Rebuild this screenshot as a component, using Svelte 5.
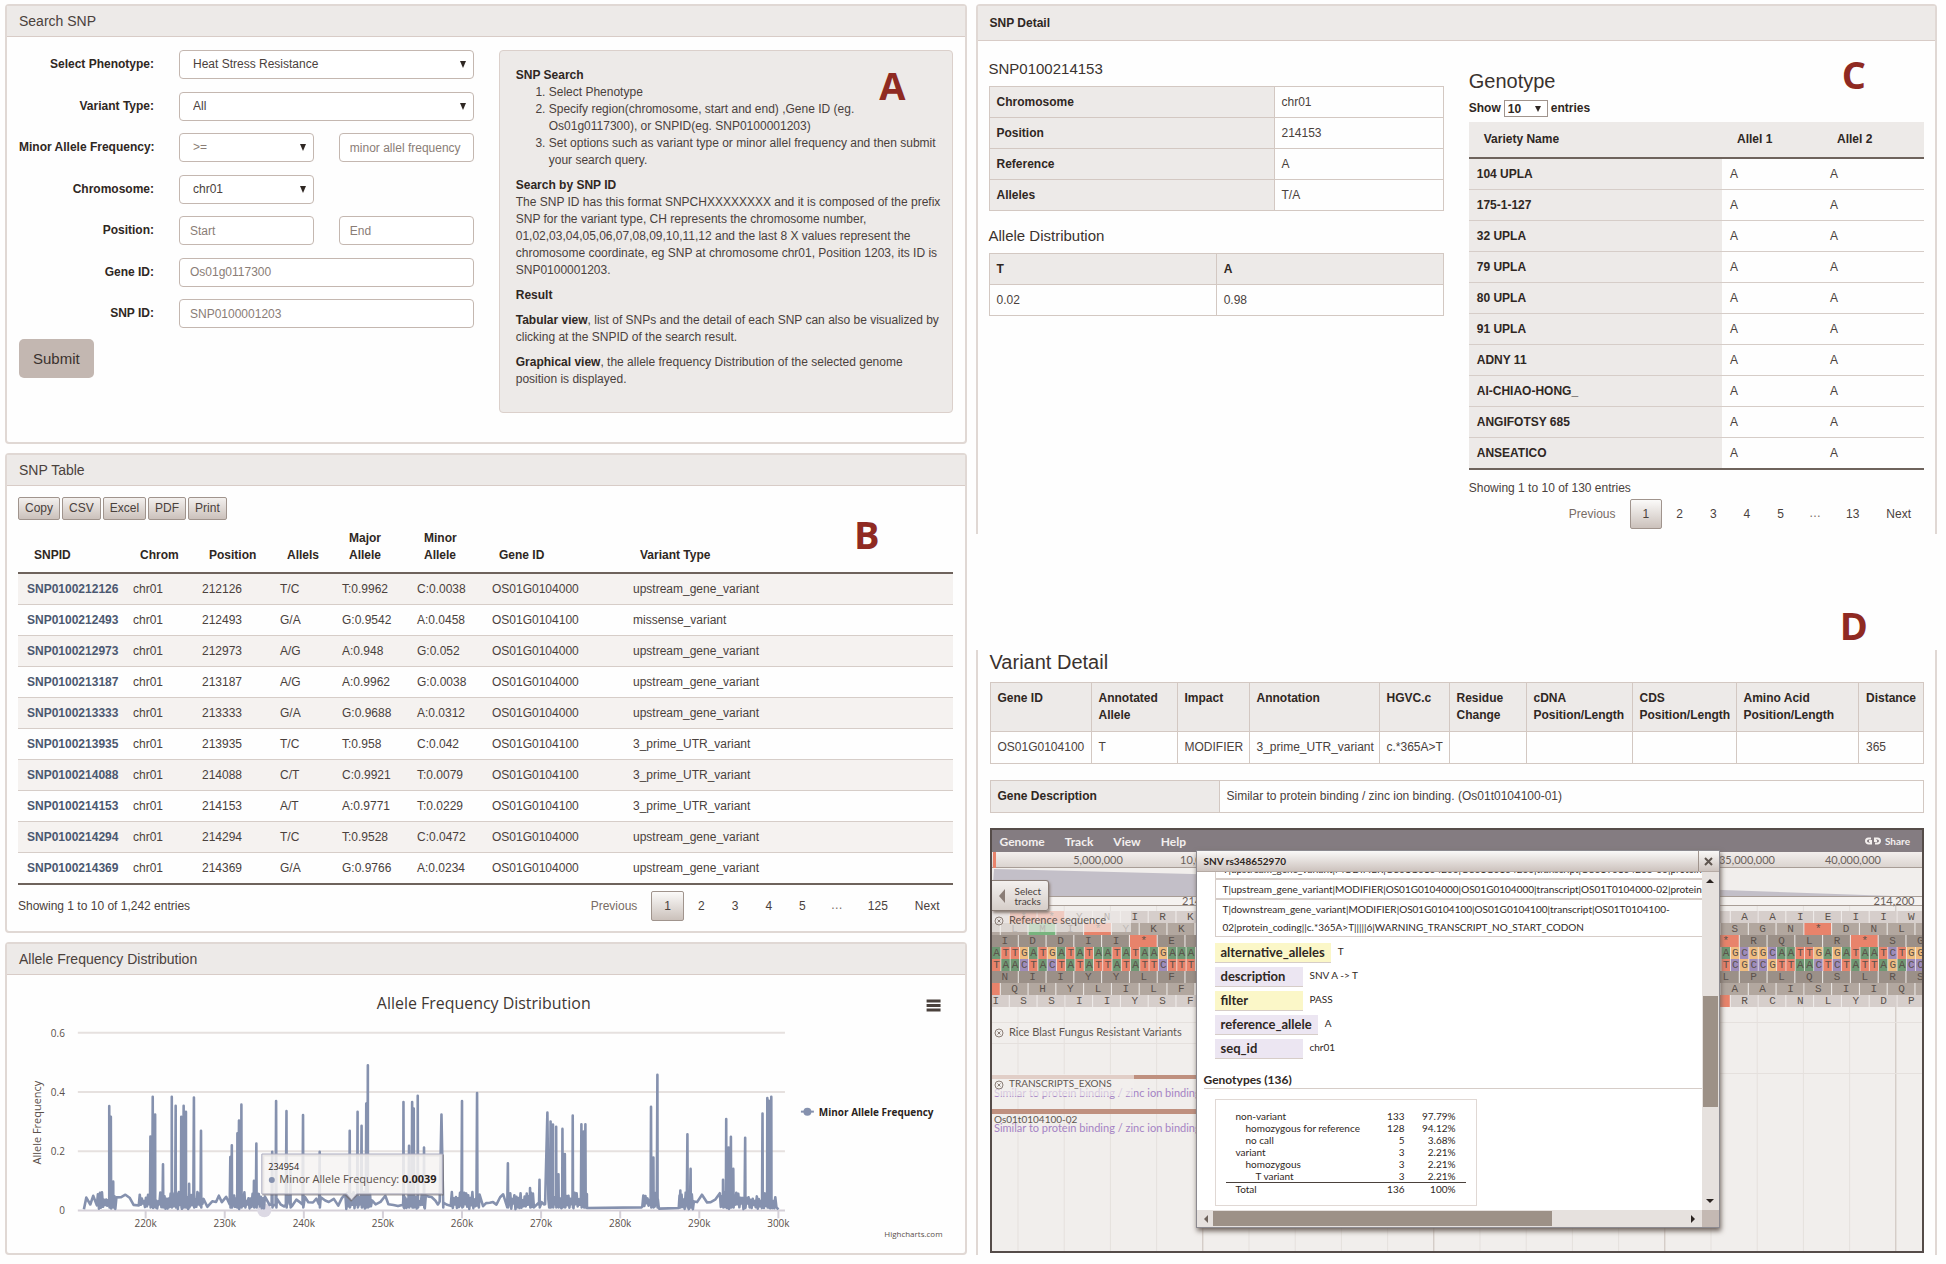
<script>
  // Search form
  let phenotype = "Heat Stress Resistance";
  let variantType = "All";
  let operator = ">=";
  let chromosome = "chr01";
  let pageSize = "10";

  const exportButtons = ["Copy", "CSV", "Excel", "PDF", "Print"];

  const snps = [
    ["SNP0100212126", "212126", "T/C", "T:0.9962", "C:0.0038", "OS01G0104000", "upstream_gene_variant"],
    ["SNP0100212493", "212493", "G/A", "G:0.9542", "A:0.0458", "OS01G0104100", "missense_variant"],
    ["SNP0100212973", "212973", "A/G", "A:0.948", "G:0.052", "OS01G0104000", "upstream_gene_variant"],
    ["SNP0100213187", "213187", "A/G", "A:0.9962", "G:0.0038", "OS01G0104000", "upstream_gene_variant"],
    ["SNP0100213333", "213333", "G/A", "G:0.9688", "A:0.0312", "OS01G0104000", "upstream_gene_variant"],
    ["SNP0100213935", "213935", "T/C", "T:0.958", "C:0.042", "OS01G0104100", "3_prime_UTR_variant"],
    ["SNP0100214088", "214088", "C/T", "C:0.9921", "T:0.0079", "OS01G0104100", "3_prime_UTR_variant"],
    ["SNP0100214153", "214153", "A/T", "A:0.9771", "T:0.0229", "OS01G0104100", "3_prime_UTR_variant"],
    ["SNP0100214294", "214294", "T/C", "T:0.9528", "C:0.0472", "OS01G0104000", "upstream_gene_variant"],
    ["SNP0100214369", "214369", "G/A", "G:0.9766", "A:0.0234", "OS01G0104000", "upstream_gene_variant"],
  ];

  const snpPages = ["Previous", "1", "2", "3", "4", "5", "…", "125", "Next"];
  const genotypePages = ["Previous", "1", "2", "3", "4", "5", "…", "13", "Next"];

  const snpDetail = [
    ["Chromosome", "chr01"],
    ["Position", "214153"],
    ["Reference", "A"],
    ["Alleles", "T/A"],
  ];

  const varieties = [
    "104 UPLA", "175-1-127", "32 UPLA", "79 UPLA", "80 UPLA",
    "91 UPLA", "ADNY 11", "AI-CHIAO-HONG_", "ANGIFOTSY 685", "ANSEATICO",
  ];

  const attributes = [
    ["alternative_alleles", "T"],
    ["description", "SNV A -> T"],
    ["filter", "PASS"],
    ["reference_allele", "A"],
    ["seq_id", "chr01"],
  ];

  // label, indent level, count, percent
  const genotypes = [
    ["non-variant", 0, 133, "97.79%"],
    ["homozygous for reference", 1, 128, "94.12%"],
    ["no call", 1, 5, "3.68%"],
    ["variant", 0, 3, "2.21%"],
    ["homozygous", 1, 3, "2.21%"],
    ["T variant", 2, 3, "2.21%"],
  ];

  // Allele frequency chart: [position in kb, frequency]
  const peaks = [
    [215.4, 0.352], [215.6, 0.316], [215.9, 0.097], [220.6, 0.249], [220.9, 0.384], [221.2, 0.324],
    [222.2, 0.156], [223.3, 0.384], [223.8, 0.353], [224.5, 0.316], [224.8, 0.353], [225.1, 0.333],
    [225.5, 0.09], [226.1, 0.381], [227, 0.269], [230.7, 0.18], [230.9, 0.22], [231.6, 0.26],
    [231.8, 0.303], [232.1, 0.357], [233.7, 0.1], [234, 0.226], [236, 0.198], [236.5, 0.369],
    [237.8, 0.335], [238.3, 0.14], [239.9, 0.322], [242, 0.198], [245.8, 0.269], [246.8, 0.333],
    [247.3, 0.286], [247.9, 0.361], [248.1, 0.49], [252.6, 0.366], [253.3, 0.218], [253.7, 0.366],
    [253.9, 0.344], [254.4, 0.387], [255.2, 0.212], [257.4, 0.324], [260, 0.369], [261.9, 0.396],
    [265.8, 0.159], [268.6, 0.075], [269.8, 0.103], [270.8, 0.33], [271.2, 0.3], [271.5, 0.29],
    [271.9, 0.282], [272.2, 0.122], [272.7, 0.275], [273, 0.19], [274, 0.32], [275.1, 0.291],
    [275.4, 0.266], [275.6, 0.291], [283.9, 0.35], [284.2, 0.178], [284.7, 0.458], [287.6, 0.067],
    [288.5, 0.257], [288.9, 0.14], [293, 0.103], [293.4, 0.308], [293.7, 0.212], [294, 0.248],
    [294.3, 0.14], [295.8, 0.245], [298, 0.327], [298.6, 0.379], [298.8, 0.37], [299.1, 0.384],
  ];
  const wide = [257.4, 261.9, 270.8];
  const sparse = [[212, 213.8], [216.2, 219], [227.2, 230.4], [235, 245], [248.6, 252.4], [255.4, 258.2], [262.1, 266], [269, 271], [289.2, 292.4]];
  const flat = [[275.8, 282.7, 0.008], [284.9, 287.4, 0.006]];

  const chartX = (kb) => Math.round((139 + (kb - 220) * 7.93) * 10) / 10;
  const chartY = (f) => Math.round((236 - f * 297) * 10) / 10;

  function buildLine() {
    let seed = 17;
    const random = () => {
      seed = (seed * 1103515245 + 12345) % 2147483648;
      return seed / 2147483648;
    };
    const points = [[212.2, 0.004]];
    let low = false;
    let kb = 212.5;
    while (kb < 299.8) {
      const gap = flat.find(([from, to]) => kb >= from && kb < to);
      if (gap) {
        points.push([gap[0], gap[2]], [gap[1], gap[2] + 0.002]);
        kb = gap[1] + 0.1;
        continue;
      }
      const calm = sparse.some(([from, to]) => kb >= from && kb < to);
      if (calm) {
        points.push([kb, 0.01 + random() * 0.045]);
        kb += 0.35 + random() * 0.3;
      } else {
        points.push([kb, low ? 0.004 + random() * 0.02 : 0.03 + random() * 0.032]);
        kb += 0.13;
      }
      low = !low;
    }
    points.push([300, 0.003]);
    for (const [at, f] of peaks) {
      const half = wide.includes(at) ? 0.45 : 0.07;
      points.push([at - half, 0.02], [at, f], [at + half / 2, 0.01]);
    }
    points.sort((a, b) => a[0] - b[0]);
    return "M" + points.map(([x, f]) => `${chartX(x)} ${chartY(f)}`).join("L");
  }

  const linePath = buildLine();
  const xTicks = [220, 230, 240, 250, 260, 270, 280, 290, 300];
  const yTicks = [0, 0.2, 0.4, 0.6];

  // Genome browser: reference sequence and its six reading frames
  const baseWidth = 9.26;
  const baseRows = [
    { y: 95, x: 0, seq: "ATTGATGATATAATATAAGAAA" },
    { y: 107, x: 0, seq: "TAACTACTATATTATATTCTTT" },
    { y: 95, x: 729.5, seq: "AGCGGCAATTGAGATAATCTGG" },
    { y: 107, x: 729.5, seq: "TCGCCGTTAACTCTATTAGACC" },
  ];
  // x is the left edge of the first codon
  const frameRows = [
    { y: 59, tone: "light", x: -10, seq: " **YNIRK" },
    { y: 71, tone: "mid", x: -19, seq: " LMI*YKK" },
    { y: 83, tone: "dark", x: -1, seq: "IDDII*EN" },
    { y: 119, tone: "dark", x: -1, seq: "NIIYYLFF" },
    { y: 131, tone: "mid", x: -19, seq: "*QHYLILF" },
    { y: 143, tone: "light", x: -10, seq: "ISSIIYSF" },
    { y: 59, tone: "light", x: 711, seq: " AAIEIIW" },
    { y: 71, tone: "mid", x: 729, seq: "SGN*DNL " },
    { y: 83, tone: "dark", x: 720, seq: "*RQLR*SG" },
    { y: 119, tone: "dark", x: 720, seq: "LPLQSLRS" },
    { y: 131, tone: "mid", x: 729, seq: "AAISIIQ " },
    { y: 143, tone: "light", x: 711, seq: "*RCNLYDP" },
  ];
  const codonWidth = 27.78;
  const gridLines = Array.from({ length: 20 }, (_, k) => ({ x: 26 + k * 46.2, major: k % 5 === 4 }));
</script>

{#snippet pager(pages)}
  <nav class="pager" aria-label="Pages">
    {#each pages as page}
      {#if page === "…"}
        <span class="ellipsis">…</span>
      {:else}
        <button
          type="button"
          class:current={page === "1"}
          class:muted={page === "Previous"}>{page}</button
        >
      {/if}
    {/each}
  </nav>
{/snippet}

<main class="page">
  <div class="column">
    <!-- Search form -->
    <section class="panel search-panel">
      <h2 class="panel-title">Search SNP</h2>
      <div class="search-body">
        <form class="search-form" onsubmit={(e) => e.preventDefault()}>
          <div class="fields">
            <div class="field">
              <label for="phenotype">Select Phenotype:</label>
              <div class="select">
                <select id="phenotype" bind:value={phenotype}>
                  <option>Heat Stress Resistance</option>
                </select>
              </div>
            </div>
            <div class="field">
              <label for="variant-type">Variant Type:</label>
              <div class="select">
                <select id="variant-type" bind:value={variantType}>
                  <option>All</option>
                </select>
              </div>
            </div>
            <div class="field split">
              <label for="maf-operator">Minor Allele Frequency:</label>
              <div class="select">
                <select id="maf-operator" class="soft" bind:value={operator}>
                  <option>&gt;=</option>
                </select>
              </div>
              <input type="text" placeholder="minor allel frequency" aria-label="Minor allele frequency value" />
            </div>
            <div class="field split">
              <label for="chromosome">Chromosome:</label>
              <div class="select">
                <select id="chromosome" bind:value={chromosome}>
                  <option>chr01</option>
                </select>
              </div>
            </div>
            <div class="field split">
              <label for="start">Position:</label>
              <input id="start" type="text" placeholder="Start" />
              <input type="text" placeholder="End" aria-label="End position" />
            </div>
            <div class="field">
              <label for="gene-id">Gene ID:</label>
              <input id="gene-id" type="text" placeholder="Os01g0117300" />
            </div>
            <div class="field">
              <label for="snp-id">SNP ID:</label>
              <input id="snp-id" type="text" placeholder="SNP0100001203" />
            </div>
          </div>
          <button type="submit" class="submit">Submit</button>
        </form>

        <div class="help">
          <strong>SNP Search</strong>
          <ol>
            <li>Select Phenotype</li>
            <li>Specify region(chromosome, start and end) ,Gene ID (eg. Os01g0117300), or SNPID(eg. SNP0100001203)</li>
            <li>Set options such as variant type or minor allel frequency and then submit your search query.</li>
          </ol>
          <p>
            <strong>Search by SNP ID</strong><br />
            The SNP ID has this format SNPCHXXXXXXXX and it is composed of the prefix SNP for the variant type, CH
            represents the chromosome number, 01,02,03,04,05,06,07,08,09,10,11,12 and the last 8 X values represent the
            chromosome coordinate, eg SNP at chromosome chr01, Position 1203, its ID is SNP0100001203.
          </p>
          <p><strong>Result</strong></p>
          <p>
            <strong>Tabular view</strong>, list of SNPs and the detail of each SNP can also be visualized by clicking at
            the SNPID of the search result.
          </p>
          <p>
            <strong>Graphical view</strong>, the allele frequency Distribution of the selected genome position is
            displayed.
          </p>
          <span class="mark mark-a">A</span>
        </div>
      </div>
    </section>

    <!-- SNP table -->
    <section class="panel table-panel">
      <h2 class="panel-title">SNP Table</h2>
      <div class="table-body">
        <div class="exports">
          {#each exportButtons as name}
            <button type="button">{name}</button>
          {/each}
        </div>
        <table class="snp-table">
          <thead>
            <tr>
              <th class="w-id">SNPID</th>
              <th class="w-chrom">Chrom</th>
              <th class="w-pos">Position</th>
              <th class="w-allels">Allels</th>
              <th class="w-allele">Major<br />Allele</th>
              <th class="w-allele">Minor<br />Allele</th>
              <th class="w-gene">Gene ID</th>
              <th>Variant Type</th>
            </tr>
          </thead>
          <tbody>
            {#each snps as [id, position, allels, major, minor, gene, type]}
              <tr>
                <td><a href="#{id}">{id}</a></td>
                <td>chr01</td>
                <td>{position}</td>
                <td>{allels}</td>
                <td>{major}</td>
                <td>{minor}</td>
                <td>{gene}</td>
                <td>{type}</td>
              </tr>
            {/each}
          </tbody>
        </table>
        <div class="table-footer">
          <span>Showing 1 to 10 of 1,242 entries</span>
          {@render pager(snpPages)}
        </div>
      </div>
      <span class="mark mark-b">B</span>
    </section>

    <!-- Frequency chart -->
    <section class="panel">
      <h2 class="panel-title">Allele Frequency Distribution</h2>
      <svg class="chart" viewBox="0 0 960 279" role="img" aria-label="Allele Frequency Distribution">
        <text class="chart-title" x="478" y="34" text-anchor="middle">Allele Frequency Distribution</text>
        {#each yTicks as tick}
          <line class={tick ? "grid-line" : "axis-line"} x1="71" x2="780" y1={chartY(tick)} y2={chartY(tick)} />
          <text class="tick" x="58" y={chartY(tick) + 4} text-anchor="end">{tick}</text>
        {/each}
        {#each xTicks as tick}
          <line class="axis-line" x1={chartX(tick)} x2={chartX(tick)} y1="236" y2="244" />
          <text class="tick" x={chartX(tick)} y="253" text-anchor="middle">{tick}k</text>
        {/each}
        <text class="axis-title" transform="translate(34 148) rotate(-90)" text-anchor="middle">Allele Frequency</text>
        <circle class="halo" cx="258" cy="236" r="7" />
        <path class="series" d={linePath} />

        <g class="menu-icon">
          <path d="M922 26h14M922 30.500h14M922 35h14" />
        </g>
        <path class="legend-line" d="M796 137h13" />
        <circle class="dot" cx="802.500" cy="137" r="4" />
        <text class="legend" x="814" y="141">Minor Allele Frequency</text>

        <path class="tooltip-shadow" d="M257 181h180v39h-86l-6 6l-6-6h-82z" />
        <path class="tooltip" d="M255.500 179.500h181v40h-86l-5 6l-5-6h-85z" />
        <text class="tip-small" x="262" y="196">234954</text>
        <circle class="dot" cx="265.500" cy="205.500" r="3" />
        <text class="tip" x="273" y="209">Minor Allele Frequency: <tspan class="strong">0.0039</tspan></text>
        <text class="credits" x="938" y="263" text-anchor="end">Highcharts.com</text>
      </svg>
    </section>
  </div>

  <div class="column">
    <!-- SNP detail -->
    <section class="panel detail-panel">
      <h2 class="panel-title small">SNP Detail</h2>
      <div class="detail-body">
        <div class="detail-left">
          <h3>SNP0100214153</h3>
          <table class="bordered compact info">
            <tbody>
              {#each snpDetail as [name, value]}
                <tr>
                  <th scope="row">{name}</th>
                  <td>{value}</td>
                </tr>
              {/each}
            </tbody>
          </table>
          <h3>Allele Distribution</h3>
          <table class="bordered compact">
            <thead>
              <tr><th>T</th><th>A</th></tr>
            </thead>
            <tbody>
              <tr><td>0.02</td><td>0.98</td></tr>
            </tbody>
          </table>
        </div>

        <div class="genotype">
          <h3 class="large">Genotype</h3>
          <label class="page-size">
            Show
            <span class="select tiny">
              <select bind:value={pageSize}>
                <option>10</option>
              </select>
            </span>
            entries
          </label>
          <table class="genotype-table">
            <thead>
              <tr>
                <th>Variety Name</th>
                <th class="w-allel-1">Allel 1</th>
                <th class="w-allel-2">Allel 2</th>
              </tr>
            </thead>
            <tbody>
              {#each varieties as variety}
                <tr>
                  <th scope="row">{variety}</th>
                  <td>A</td>
                  <td>A</td>
                </tr>
              {/each}
            </tbody>
          </table>
          <div class="genotype-info">Showing 1 to 10 of 130 entries</div>
          {@render pager(genotypePages)}
        </div>
      </div>
      <span class="mark mark-c">C</span>
    </section>

    <!-- Variant detail -->
    <section class="variant-panel">
      <span class="mark mark-d">D</span>
      <h3 class="large">Variant Detail</h3>
      <table class="bordered variant-table">
        <thead>
          <tr>
            <th class="v-gene">Gene ID</th>
            <th class="v-allele">Annotated Allele</th>
            <th class="v-impact">Impact</th>
            <th class="v-annotation">Annotation</th>
            <th class="v-hgvc">HGVC.c</th>
            <th class="v-residue">Residue Change</th>
            <th class="v-cdna">cDNA Position/Length</th>
            <th class="v-cds">CDS Position/Length</th>
            <th>Amino Acid<br />Position/Length</th>
            <th class="v-distance">Distance</th>
          </tr>
        </thead>
        <tbody>
          <tr>
            <td>OS01G0104100</td>
            <td>T</td>
            <td>MODIFIER</td>
            <td>3_prime_UTR_variant</td>
            <td>c.*365A&gt;T</td>
            <td></td>
            <td></td>
            <td></td>
            <td></td>
            <td>365</td>
          </tr>
        </tbody>
      </table>
      <table class="bordered description-table">
        <tbody>
          <tr>
            <th scope="row">Gene Description</th>
            <td>Similar to protein binding / zinc ion binding. (Os01t0104100-01)</td>
          </tr>
        </tbody>
      </table>

      <!-- Genome browser -->
      <div class="browser">
        <div class="menu-bar">
          <button type="button">Genome</button>
          <button type="button">Track</button>
          <button type="button">View</button>
          <button type="button">Help</button>
          <button type="button" class="share">
            <svg viewBox="0 0 16 8" width="16" height="8" aria-hidden="true">
              <path d="M6 1.500H3.500a2.500 2.500 0 0 0 0 5H6V4H4M12 4H10V1.500h2.500a2.500 2.500 0 0 1 0 5H10" />
            </svg>
            Share
          </button>
        </div>

        <svg class="tracks" viewBox="0 0 931 399" preserveAspectRatio="xMinYMin slice" aria-hidden="true">
          <defs>
            <linearGradient id="ruler" x1="0" y1="0" x2="0" y2="1">
              <stop offset="0" stop-color="#f3efed" />
              <stop offset="1" stop-color="#dbd4d0" />
            </linearGradient>
          </defs>

          {#each gridLines as line}
            <line class="guide" class:major={line.major} x1={line.x} x2={line.x} y1="54" y2="399" />
          {/each}
          <path class="guide" d="M0 170.500H931M0 191.500H205M720 221.500H931" />

          <rect fill="url(#ruler)" x="0" y="0" width="931" height="15" />
          <path class="rule" d="M0 15.500H931" />
          <text class="scale" x="106" y="12" text-anchor="middle">5,000,000</text>
          <text class="scale" x="188" y="12">10,000,000</text>
          <text class="scale" x="755" y="12" text-anchor="middle">35,000,000</text>
          <text class="scale" x="861" y="12" text-anchor="middle">40,000,000</text>
          <rect class="marker" x="1" y="0" width="3" height="16" />

          <path class="zoom-area" d="M2 17L200 22L731 38L931 45H0z" />
          <rect class="ruler-low" x="0" y="45" width="931" height="8" />
          <path class="rule" d="M0 44.500H931M0 53.500H931" />
          <text class="scale" x="190" y="53">214,100</text>
          <text class="scale" x="902" y="53" text-anchor="middle">214,200</text>

          {#each frameRows as row}
            {#each row.seq as amino, i}
              <rect
                class={amino === "*" ? "stop" : amino === "M" ? "start" : row.tone}
                x={row.x + i * codonWidth}
                y={row.y}
                width={codonWidth - 1}
                height="12"
              />
              <text class="amino" x={row.x + (i + 0.5) * codonWidth} y={row.y + 9} text-anchor="middle">{amino}</text>
            {/each}
          {/each}
          {#each baseRows as row}
            {#each row.seq as base, i}
              <rect class="base-{base}" x={row.x + i * baseWidth} y={row.y} width="8.500" height="12" />
              <text class="amino" x={row.x + (i + 0.5) * baseWidth} y={row.y + 9} text-anchor="middle">{base}</text>
            {/each}
          {/each}

          <rect class="exon" x="0" y="223" width="210" height="4" />
          <text class="gene" x="2" y="245">Similar to protein binding / zinc ion binding</text>
          <rect class="exon" x="0" y="257" width="210" height="5" />
          <text class="gene" x="2" y="280">Similar to protein binding / zinc ion binding</text>
          <text class="track-name code" x="2" y="271">Os01t0104100-02</text>

          <rect class="veil" x="0" y="59" width="139" height="21" />
          <rect class="veil" x="0" y="222" width="142" height="22" />
          {#each [69, 181, 233] as y}
            <circle class="track-close" cx="7" cy={y} r="4" />
            <path class="track-close" d="M5.500 {y - 1.5}l3 3m0-3l-3 3" />
          {/each}
          <text class="track-name" x="17" y="72">Reference sequence</text>
          <text class="track-name" x="17" y="184">Rice Blast Fungus Resistant Variants</text>
          <text class="track-name code" x="17" y="235">TRANSCRIPTS_EXONS</text>
        </svg>

        <button type="button" class="select-tracks"><i></i><span>Select<br />tracks</span></button>

        <div class="popup" role="dialog" aria-label="SNV rs348652970">
          <div class="popup-title">
            <span>SNV rs348652970</span>
            <button type="button" aria-label="Close">
              <svg viewBox="0 0 9 9" width="9" height="9"><path d="M1 1l7 7M8 1l-7 7" /></svg>
            </button>
          </div>
          <div class="popup-view">
            <div class="popup-content">
              <ul class="annotations">
                <li class="cut">T|upstream_gene_variant|MODIFIER|OS01G0104200|OS01G0104200|transcript|OS01T0104200-00|protein_coding</li>
                <li>T|upstream_gene_variant|MODIFIER|OS01G0104000|OS01G0104000|transcript|OS01T0104000-02|protein_coding</li>
                <li>
                  T|downstream_gene_variant|MODIFIER|OS01G0104100|OS01G0104100|transcript|OS01T0104100-<br
                  />02|protein_coding||c.*365A&gt;T|||||6|WARNING_TRANSCRIPT_NO_START_CODON
                </li>
              </ul>
              <dl>
                {#each attributes as [name, value], i}
                  <div>
                    <dt class:yellow={name === "filter" || i === 0}>{name}</dt>
                    <dd>{value}</dd>
                  </div>
                {/each}
              </dl>
              <h4>Genotypes (136)</h4>
              <div class="summary">
                <table>
                  <tbody>
                    {#each genotypes as [name, level, count, percent]}
                      <tr>
                        <td class="level-{level}">{name}</td>
                        <td>{count}</td>
                        <td>{percent}</td>
                      </tr>
                    {/each}
                  </tbody>
                  <tfoot>
                    <tr>
                      <td>Total</td>
                      <td>136</td>
                      <td>100%</td>
                    </tr>
                  </tfoot>
                </table>
              </div>
            </div>
            <div class="scroll-y"><i class="up"></i><b></b><i class="down"></i></div>
            <div class="scroll-x"><i class="left"></i><b></b><i class="right"></i></div>
            <div class="corner"></div>
          </div>
        </div>
      </div>
    </section>
  </div>
</main>

<style>
  :global(body) {
    margin: 0;
    background: #fefefe;
  }

  .page {
    display: grid;
    grid-template-columns: 1fr 1fr;
    gap: 9px;
    padding: 4px 9px 8px 5px;
    font-family: "Liberation Sans", Arial, sans-serif;
    font-size: 12px;
    line-height: 17px;
    color: #4a413c;
  }

  .page *,
  .page *::after {
    box-sizing: border-box;
  }

  button,
  input,
  select {
    font: inherit;
    color: inherit;
    margin: 0;
  }

  .column {
    display: flex;
    flex-direction: column;
    gap: 9px;
    min-width: 0;
  }

  /* Panels */
  .panel {
    position: relative;
    border: 2px solid #e0d8d4;
    border-radius: 4px;
  }

  .panel-title {
    margin: 0;
    padding: 0 12px;
    font-size: 14px;
    font-weight: 400;
    line-height: 30px;
    background: #edeae8;
    border-bottom: 1px solid #d8ccc7;
  }

  .panel-title.small {
    font-size: 12px;
    font-weight: 700;
    line-height: 34px;
    color: #2f2723;
  }

  h3 {
    margin: 0;
    font-size: 15px;
    font-weight: 400;
    line-height: 20px;
    color: #3a322e;
  }

  h3.large {
    font-size: 20px;
    line-height: 24px;
  }

  strong,
  label,
  th {
    font-weight: 700;
    color: #2f2723;
  }

  .mark {
    position: absolute;
    font-family: "Open Sans", sans-serif;
    font-size: 38px;
    font-weight: 700;
    line-height: 38px;
    color: #8f2a22;
  }

  .mark-a {
    top: 15px;
    right: 46px;
  }

  .mark-b {
    top: 60px;
    right: 85px;
  }

  .mark-c {
    top: 49px;
    right: 69px;
  }

  .mark-d {
    top: -44px;
    right: 67px;
  }

  /* Search form */
  .search-panel {
    min-height: 440px;
  }

  .search-body {
    display: grid;
    grid-template-columns: 455fr 454fr;
    gap: 25px;
    padding: 13px 12px 0;
  }

  .fields {
    display: flex;
    flex-direction: column;
    justify-content: space-between;
    height: 278px;
  }

  .field {
    display: grid;
    grid-template-columns: 135px 1fr;
    column-gap: 25px;
    align-items: center;
  }

  .field.split {
    grid-template-columns: 135px 1fr 1fr;
  }

  .field label {
    text-align: right;
    white-space: nowrap;
  }

  .select {
    position: relative;
    display: block;
  }

  .select::after {
    content: "";
    position: absolute;
    top: 11px;
    right: 8px;
    border: 3px solid transparent;
    border-top: 7px solid #2f2723;
    border-bottom: 0;
    pointer-events: none;
  }

  input,
  select {
    display: block;
    width: 100%;
    height: 29px;
    padding: 0 10px;
    border: 1px solid #c4b7b0;
    border-radius: 4px;
    background: #fff;
    appearance: none;
    outline: 0;
  }

  select {
    padding-left: 13px;
  }

  select.soft,
  input::placeholder {
    color: #8a7d76;
    opacity: 1;
  }

  .submit {
    height: 39px;
    margin-top: 11px;
    padding: 0 14px;
    font-size: 15px;
    border: 0;
    border-radius: 5px;
    background: #c3b7b1;
    color: #3a322e;
  }

  .help {
    position: relative;
    min-height: 363px;
    padding: 16px 8px 16px 16px;
    background: #edeae8;
    border: 1px solid #dbd0cb;
    border-radius: 4px;
  }

  .help ol {
    margin: 0 0 8px;
    padding-left: 33px;
  }

  .help p {
    margin: 0 0 8px;
  }

  /* SNP table */
  .table-body {
    padding: 11px 12px 10px 11px;
  }

  .exports {
    display: flex;
    gap: 2px;
  }

  .exports button {
    height: 23px;
    padding: 0 6px;
    border: 1px solid #a0948d;
    border-radius: 2px;
    background: linear-gradient(#f3f0ee, #cbc1bb);
  }

  table {
    width: 100%;
    border-collapse: collapse;
    table-layout: fixed;
  }

  th,
  td {
    padding: 6px;
    text-align: left;
    vertical-align: top;
  }

  .snp-table {
    border-bottom: 2px solid #6e635c;
  }

  .snp-table th {
    padding: 10px 0 8px 16px;
    vertical-align: bottom;
    border-bottom: 2px solid #6e635c;
  }

  .snp-table td {
    padding: 7px 0 6px 9px;
    border-bottom: 1px solid #d6cdc8;
  }

  .snp-table tbody tr:nth-child(odd) {
    background: #f5f2f0;
  }

  .snp-table a {
    color: #4b5870;
    font-weight: 700;
    text-decoration: none;
  }

  .w-id {
    width: 106px;
  }

  .w-chrom {
    width: 69px;
  }

  .w-pos {
    width: 78px;
  }

  .w-allels {
    width: 62px;
  }

  .w-allele {
    width: 75px;
  }

  .w-gene {
    width: 141px;
  }

  .table-footer {
    display: flex;
    justify-content: space-between;
    align-items: center;
    padding-top: 6px;
  }

  .pager {
    display: flex;
    justify-content: flex-end;
    gap: 1px;
    line-height: 28px;
  }

  .pager button {
    height: 30px;
    padding: 0 12px;
    border: 1px solid transparent;
    border-radius: 2px;
    background: none;
  }

  .pager .current {
    border-color: #a0948d;
    background: linear-gradient(#fbfaf9, #cbc1bb);
  }

  .pager .muted {
    color: #786c65;
  }

  .pager .ellipsis {
    padding: 0 11px;
    color: #786c65;
  }

  /* Chart */
  .chart {
    display: block;
    width: 100%;
    font-family: "Open Sans", sans-serif;
    fill: #5a504a;
  }

  .chart-title {
    font-size: 16px;
    fill: #3f3733;
  }

  .tick,
  .legend {
    font-size: 10px;
  }

  .axis-title,
  .tip {
    font-size: 11px;
  }

  .legend,
  .strong {
    font-weight: 700;
    fill: #2a2320;
  }

  .tip-small {
    font-size: 9px;
    fill: #2a2320;
  }

  .credits {
    font-size: 8px;
  }

  .grid-line {
    stroke: #e6e1df;
    stroke-width: 2;
  }

  .axis-line {
    stroke: #d5d0d8;
    stroke-width: 2;
  }

  .halo {
    fill: #dcd9e4;
  }

  .series {
    fill: none;
    stroke: #8591ae;
    stroke-width: 2.6;
    stroke-linejoin: round;
  }

  .menu-icon {
    stroke: #4a413c;
    stroke-width: 3;
  }

  .legend-line {
    stroke: #8591ae;
    stroke-width: 2;
  }

  .dot {
    fill: #8591ae;
  }

  .tooltip {
    fill: #f6f3f2;
    fill-opacity: 0.85;
    stroke: #a9a9bd;
  }

  .tooltip-shadow {
    fill: none;
    stroke: #6e6560;
    stroke-width: 2;
    stroke-opacity: 0.6;
  }

  /* SNP detail */
  .detail-panel {
    margin-bottom: 107px;
    border-bottom: 0;
    border-radius: 4px 4px 0 0;
  }

  .detail-body {
    display: grid;
    grid-template-columns: 1fr 1fr;
    gap: 25px;
    padding: 18px 11px 5px;
  }

  .detail-left h3 {
    margin-bottom: 7px;
  }

  .bordered + h3 {
    margin-top: 15px;
  }

  .bordered th,
  .bordered td {
    padding: 7px 4px 7px 7px;
    border: 1px solid #d3c8c2;
  }

  .bordered.compact th,
  .bordered.compact td {
    padding-bottom: 6px;
  }

  .bordered th {
    background: #edeae8;
  }

  .info th {
    width: 285px;
  }

  .genotype {
    padding-top: 10px;
  }

  .page-size {
    display: flex;
    align-items: center;
    gap: 3px;
    margin: 7px 0 5px;
  }

  .tiny {
    width: 44px;
  }

  .tiny select {
    height: 17px;
    padding: 0 3px;
    border-radius: 0;
    border-color: #a0948d;
    color: #2f2723;
  }

  .tiny::after {
    top: 6px;
    right: 7px;
    border-top-width: 6px;
  }

  .genotype-table {
    border-bottom: 2px solid #6e635c;
  }

  .genotype-table thead th {
    padding: 9px 0 9px 15px;
    border-bottom: 2px solid #6e635c;
  }

  .genotype-table tbody th,
  .genotype-table tbody td {
    padding: 7px 0 6px 8px;
    border-bottom: 1px solid #d6cdc8;
  }

  .genotype-table th {
    background: #edeae8;
  }

  .w-allel-1 {
    width: 100px;
  }

  .w-allel-2 {
    width: 102px;
  }

  .genotype-info {
    margin: 10px 0 2px;
  }

  /* Variant detail */
  .variant-panel {
    position: relative;
    padding: 0 11px 2px 12px;
    border: solid #e0d8d4;
    border-width: 0 2px;
  }

  .variant-table {
    margin: 8px 0 16px;
  }

  .v-gene {
    width: 101px;
  }

  .v-allele {
    width: 86px;
  }

  .v-impact {
    width: 72px;
  }

  .v-annotation {
    width: 130px;
  }

  .v-hgvc {
    width: 70px;
  }

  .v-residue {
    width: 77px;
  }

  .v-cdna {
    width: 106px;
  }

  .v-cds {
    width: 104px;
  }

  .v-distance {
    width: 65px;
  }

  .description-table th {
    width: 229px;
  }

  /* Genome browser */
  .browser {
    position: relative;
    margin-top: 15px;
    border: 2px solid #554c49;
    background: #f1eeec;
    font-family: Lato, sans-serif;
    overflow: hidden;
  }

  .menu-bar {
    display: flex;
    align-items: center;
    gap: 20px;
    height: 22px;
    padding: 0 12px 0 8px;
    background: #847c81;
    color: #f3efee;
  }

  .menu-bar button {
    padding: 0;
    border: 0;
    background: none;
    font-size: 12px;
    font-weight: 700;
  }

  .menu-bar .share {
    display: flex;
    align-items: center;
    gap: 4px;
    margin-left: auto;
    font-size: 10px;
  }

  .share svg {
    fill: none;
    stroke: #f3efee;
    stroke-width: 2;
  }

  .tracks {
    display: block;
    width: 100%;
    height: 399px;
    fill: #5f5650;
  }

  .guide {
    fill: none;
    stroke: #e5e0dd;
  }

  .guide.major {
    stroke: #c9bfba;
  }

  .rule {
    stroke: #a89d96;
  }

  .ruler-low {
    fill: #f5f2f0;
  }

  .scale {
    font-size: 11px;
    fill: #6a605a;
  }

  .marker,
  .stop {
    fill: #e8836b;
  }

  .start {
    fill: #78b47e;
  }

  .zoom-area {
    fill: #c3bfc8;
  }

  .light {
    fill: #d6cecb;
  }

  .mid {
    fill: #b2a79f;
  }

  .dark {
    fill: #9b9088;
  }

  .base-A {
    fill: #6f9873;
  }

  .base-T {
    fill: #e8836b;
  }

  .base-G {
    fill: #efbc7f;
  }

  .base-C {
    fill: #9e8cba;
  }

  .amino {
    font-family: "Liberation Mono", monospace;
    font-size: 11px;
    fill: #5c524c;
  }

  .exon {
    fill: #bf907f;
  }

  .gene {
    font-size: 11px;
    fill: #a583c4;
  }

  .track-name {
    font-size: 11px;
  }

  .track-name.code {
    font-size: 10px;
  }

  .veil {
    fill: #f3f0ee;
    fill-opacity: 0.65;
  }

  .track-close {
    fill: none;
    stroke: #8a7d76;
  }

  .select-tracks {
    position: absolute;
    top: 50px;
    left: 0;
    display: flex;
    align-items: center;
    gap: 10px;
    height: 31px;
    padding: 0 7px;
    border: 1px solid #8a7d76;
    border-left: 0;
    border-radius: 0 3px 3px 0;
    background: linear-gradient(#f3f0ee, #d6cec9);
    box-shadow: 1px 2px 3px #8a7d76;
    font-size: 10px;
    line-height: 10px;
    text-align: left;
  }

  .select-tracks i {
    border: 7px solid transparent;
    border-right: 6px solid #8a7d76;
    border-left: 0;
  }

  /* Feature popup */
  .popup {
    position: absolute;
    top: 20px;
    left: 204px;
    width: 524px;
    border: 1px solid #8c8a90;
    background: #fff;
    box-shadow: 1px 3px 5px #6e635c;
    font-size: 10px;
    color: #2f2723;
  }

  .popup-title {
    display: flex;
    justify-content: space-between;
    height: 21px;
    padding-left: 7px;
    line-height: 20px;
    font-weight: 700;
    background: linear-gradient(#faf9f8, #cdc3be);
    border-bottom: 1px solid #b5aaa4;
  }

  .popup-title button {
    display: grid;
    place-items: center;
    width: 21px;
    padding: 0;
    border: 0;
    border-left: 1px solid #a0948d;
    background: none;
  }

  .popup-title path {
    stroke: #5f5650;
    stroke-width: 2;
  }

  .popup-view {
    display: grid;
    grid-template-columns: 1fr 17px;
    grid-template-rows: 338px 17px;
  }

  .popup-content {
    overflow: hidden;
    padding-left: 7px;
  }

  .annotations {
    width: 600px;
    margin: -13px 0 6px 11px;
    padding: 0;
    list-style: none;
    border: 1px solid #d6cdc8;
  }

  .annotations li {
    padding: 0 7px;
    line-height: 18px;
    white-space: nowrap;
  }

  .annotations li + li {
    border-top: 2px solid #d6cdc8;
  }

  dl {
    display: flex;
    flex-direction: column;
    gap: 4px;
    margin: 0 0 12px 11px;
  }

  dl div {
    display: flex;
    gap: 7px;
    line-height: 17px;
  }

  dt {
    min-width: 88px;
    height: 20px;
    padding: 0 6px;
    line-height: 19px;
    font-size: 13px;
    font-weight: 700;
    background: #ece6f2;
    border-bottom: 1px solid #d6cdc8;
  }

  dt.yellow {
    background: #fbf7c8;
  }

  dd {
    margin: 0;
  }

  h4 {
    margin: 0 0 10px;
    font-size: 12px;
    line-height: 17px;
    border-bottom: 1px solid #d6cdc8;
  }

  .summary {
    width: 262px;
    margin-left: 11px;
    padding: 10px;
    border: 1px solid #e0d8d4;
  }

  .summary td {
    padding: 0 10px;
    line-height: 12px;
    white-space: nowrap;
  }

  .summary td:nth-child(2) {
    width: 48px;
    text-align: right;
  }

  .summary td:nth-child(3) {
    width: 51px;
    padding-left: 0;
    text-align: right;
  }

  .summary .level-1 {
    padding-left: 20px;
  }

  .summary .level-2 {
    padding-left: 30px;
  }

  .summary tfoot {
    border-top: 1px solid #4a413c;
  }

  .scroll-y,
  .scroll-x {
    display: flex;
    align-items: center;
    background: #e6e1de;
  }

  .scroll-y {
    flex-direction: column;
    padding: 7px 0;
  }

  .scroll-x {
    padding: 0 7px;
  }

  .scroll-y b,
  .scroll-x b {
    background: #9d9187;
  }

  .scroll-y b {
    width: 15px;
    height: 111px;
    margin: 113px 0 auto;
  }

  .scroll-x b {
    width: 339px;
    height: 15px;
    margin: 0 auto 0 5px;
  }

  .scroll-y i,
  .scroll-x i {
    border: 4px solid transparent;
  }

  .scroll-y .up {
    border-top: 0;
    border-bottom-color: #2a2320;
  }

  .scroll-y .down {
    border-bottom: 0;
    border-top-color: #2a2320;
  }

  .scroll-x .left {
    border-left: 0;
    border-right-color: #6e635c;
  }

  .scroll-x .right {
    border-right: 0;
    border-left-color: #2a2320;
  }

  .corner {
    background: #c4b9b3;
  }
</style>
